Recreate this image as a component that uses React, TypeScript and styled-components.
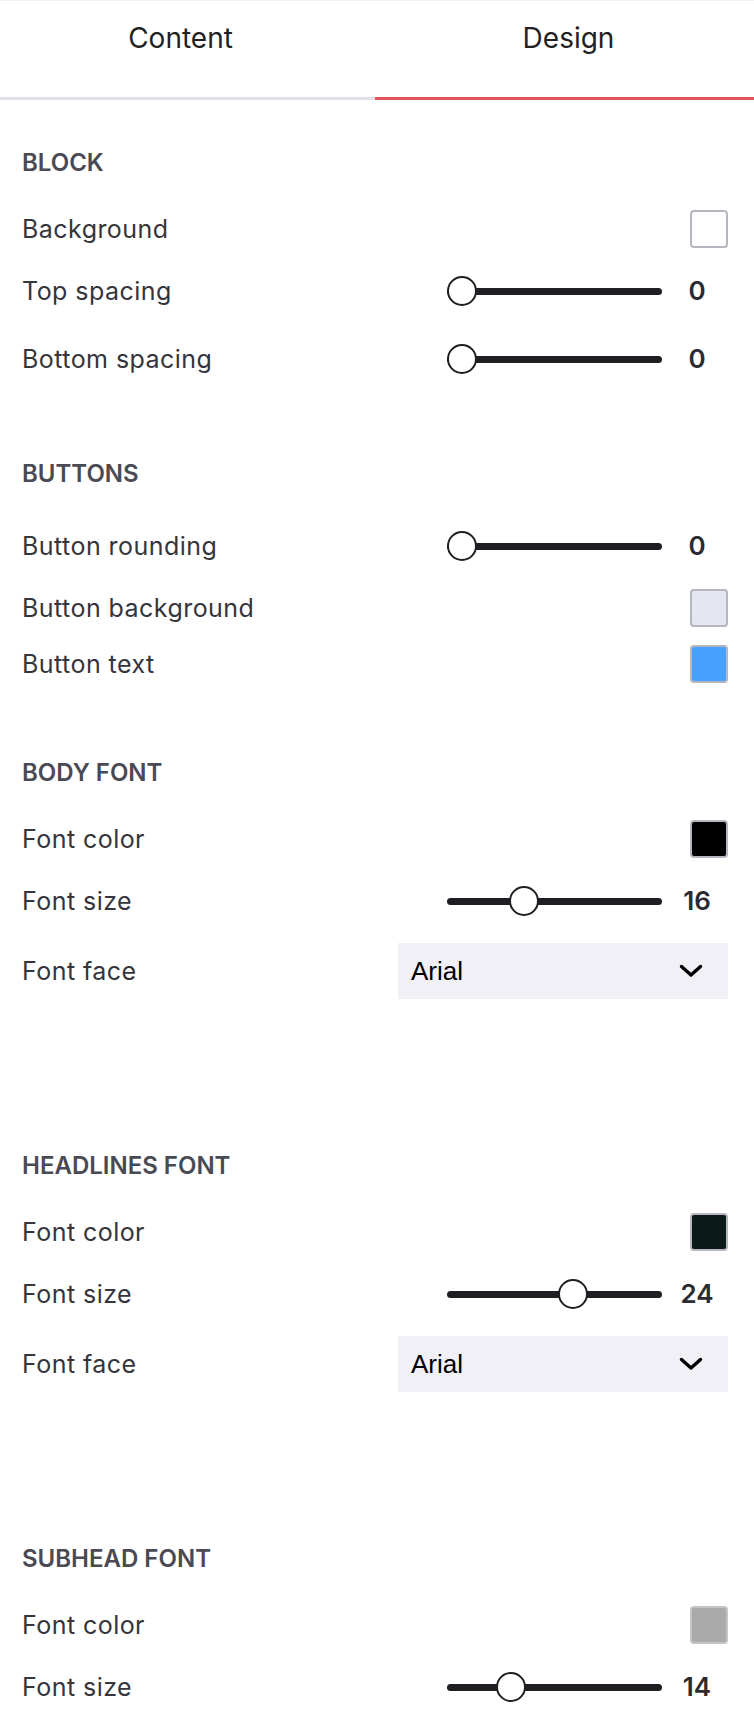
import React from "react";
import styled, { createGlobalStyle } from "styled-components";

const GlobalStyle = createGlobalStyle`
  html, body {
    margin: 0;
    padding: 0;
    background: #ffffff;
    overflow: hidden;
  }
  body {
    font-family: Inter, "Noto Sans", sans-serif;
  }
`;

const Panel = styled.div`
  width: 754px;
  background: #ffffff;
`;

const TabBar = styled.div`
  display: flex;
  border-top: 1px solid #f1f1f3;
`;

const Tab = styled.div<{ active: boolean; shift: number }>`
  flex: ${({ active }) => (active ? "1" : "0 0 375px")};
  height: 99px;
  box-sizing: border-box;
  padding-top: 21px;
  padding-left: ${({ shift }) => (shift > 0 ? shift * 2 : 0)}px;
  padding-right: ${({ shift }) => (shift < 0 ? -shift * 2 : 0)}px;
  text-align: center;
  font-size: 28px;
  line-height: 32px;
  color: #1f1f24;
  border-bottom: 3px solid ${({ active }) => (active ? "#e5535a" : "#e2e0ea")};
`;

const Body = styled.div`
  padding: 0 26px 0 22px;
`;

const Section = styled.div<{ gap: number }>`
  padding-top: ${({ gap }) => gap}px;
`;

const Heading = styled.div`
  font-size: 24px;
  line-height: 30px;
  font-weight: 600;
  color: #4a4a54;
  text-transform: uppercase;
  margin-bottom: 23px;
`;

const Row = styled.div<{ h: number }>`
  display: flex;
  align-items: center;
  justify-content: space-between;
  height: ${({ h }) => h}px;
`;

const Label = styled.div`
  font-size: 25px;
  letter-spacing: 0.45px;
  line-height: 30px;
  color: #35353b;
`;

const Swatch = styled.div<{ color: string; edge?: string }>`
  width: 38px;
  height: 38px;
  box-sizing: border-box;
  border-radius: 4px;
  border: 2px solid ${({ edge }) => edge || "#b7b6be"};
  background: ${({ color }) => color};
`;

const SliderWrap = styled.div`
  display: flex;
  align-items: center;
`;

const Track = styled.div`
  position: relative;
  width: 215px;
  height: 7px;
  border-radius: 4px;
  background: #1f1f23;
  margin-right: 4px;
`;

const Thumb = styled.div`
  position: absolute;
  top: 50%;
  width: 30px;
  height: 30px;
  box-sizing: border-box;
  margin-left: -15px;
  margin-top: -15px;
  border-radius: 50%;
  border: 2px solid #1f1f23;
  background: #ffffff;
`;

const Value = styled.div`
  width: 62px;
  text-align: center;
  font-size: 26px;
  line-height: 30px;
  font-weight: 600;
  color: #2b2b32;
`;

const Select = styled.div`
  width: 330px;
  height: 56px;
  box-sizing: border-box;
  padding: 0 25px 0 13px;
  display: flex;
  align-items: center;
  justify-content: space-between;
  background: #f0f0f6;
  font-family: "Liberation Sans", Arial, sans-serif;
  font-size: 26px;
  color: #000000;
`;

type Control =
  | { kind: "color"; label: string; color: string; edge?: string }
  | { kind: "slider"; label: string; value: number; min: number; max: number }
  | { kind: "select"; label: string; value: string };

interface SectionData {
  title: string;
  gap: number;
  controls: Control[];
}

const Chevron = () => (
  <svg width="24" height="14" viewBox="0 0 24 14">
    <polyline
      points="2.5,2.5 12,11 21.5,2.5"
      fill="none"
      stroke="#000"
      strokeWidth="3.4"
      strokeLinecap="round"
      strokeLinejoin="round"
    />
  </svg>
);

const Slider: React.FC<{ value: number; min: number; max: number }> = ({ value, min, max }) => {
  const p = (value - min) / (max - min);
  return (
    <SliderWrap>
      <Track>
        <Thumb style={{ left: 15 + p * 185 }} />
      </Track>
      <Value>{value}</Value>
    </SliderWrap>
  );
};

const sections: SectionData[] = [
  {
    title: "Block",
    gap: 48,
    controls: [
      { kind: "color", label: "Background", color: "#ffffff" },
      { kind: "slider", label: "Top spacing", value: 0, min: 0, max: 100 },
      { kind: "slider", label: "Bottom spacing", value: 0, min: 0, max: 100 },
    ],
  },
  {
    title: "Buttons",
    gap: 66,
    controls: [
      { kind: "slider", label: "Button rounding", value: 0, min: 0, max: 30 },
      { kind: "color", label: "Button background", color: "#e4e7f0" },
      { kind: "color", label: "Button text", color: "#45a1fb" },
    ],
  },
  {
    title: "Body font",
    gap: 66,
    controls: [
      { kind: "color", label: "Font color", color: "#000000" },
      { kind: "slider", label: "Font size", value: 16, min: 6, max: 36 },
      { kind: "select", label: "Font face", value: "Arial" },
    ],
  },
  {
    title: "Headlines font",
    gap: 144,
    controls: [
      { kind: "color", label: "Font color", color: "#0b1a19" },
      { kind: "slider", label: "Font size", value: 24, min: 6, max: 36 },
      { kind: "select", label: "Font face", value: "Arial" },
    ],
  },
  {
    title: "Subhead font",
    gap: 144,
    controls: [
      { kind: "color", label: "Font color", color: "#aaaaaa", edge: "#c4c4c8" },
      { kind: "slider", label: "Font size", value: 14, min: 6, max: 36 },
    ],
  },
];

const rowHeight = { color: 56, slider: 68, select: 72 };

const ControlRow: React.FC<{ c: Control }> = ({ c }) => (
  <Row h={rowHeight[c.kind]}>
    <Label>{c.label}</Label>
    {c.kind === "color" && <Swatch color={c.color} edge={c.edge} />}
    {c.kind === "slider" && <Slider value={c.value} min={c.min} max={c.max} />}
    {c.kind === "select" && (
      <Select>
        <span>{c.value}</span>
        <Chevron />
      </Select>
    )}
  </Row>
);

export default function App() {
  return (
    <>
      <GlobalStyle />
      <Panel>
        <TabBar>
          <Tab active={false} shift={-7}>Content</Tab>
          <Tab active={true} shift={4}>Design</Tab>
        </TabBar>
        <Body>
          {sections.map((s) => (
            <Section key={s.title} gap={s.gap}>
              <Heading>{s.title}</Heading>
              {s.controls.map((c, i) => (
                <ControlRow key={i} c={c} />
              ))}
            </Section>
          ))}
        </Body>
      </Panel>
    </>
  );
}
